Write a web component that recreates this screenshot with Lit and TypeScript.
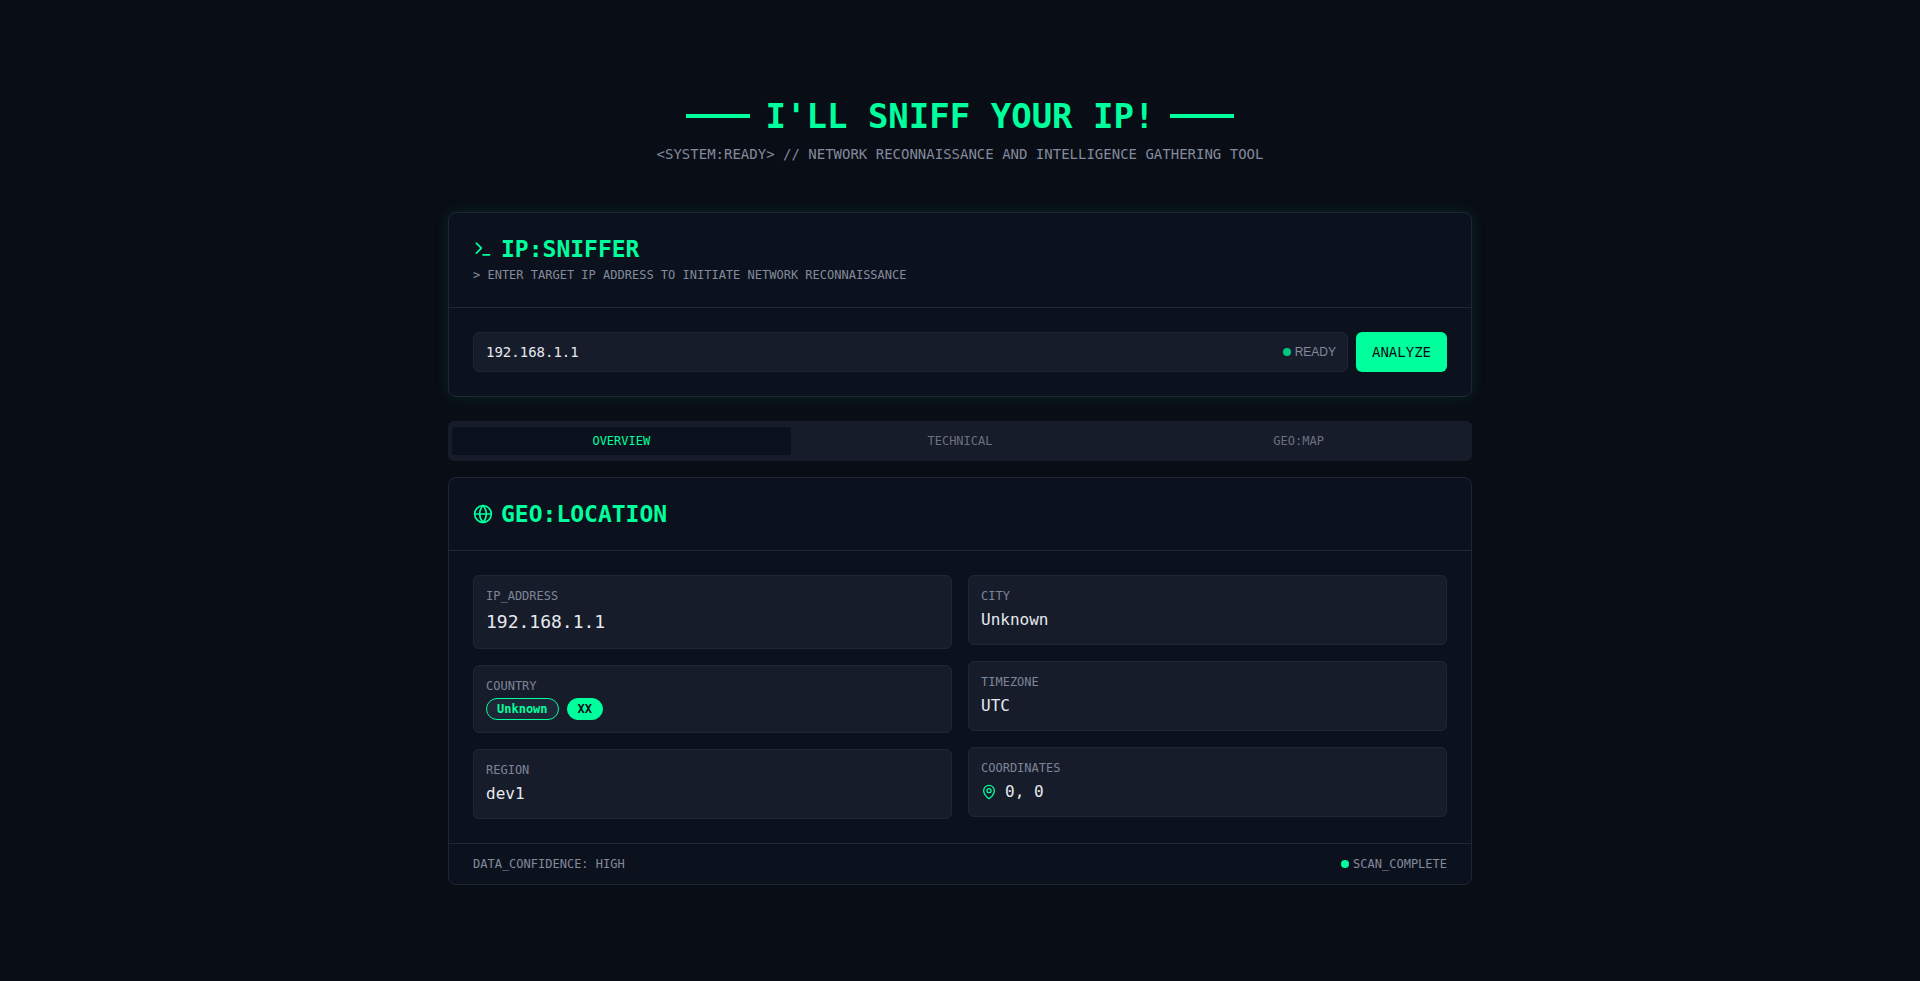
import { LitElement, html, css, svg, nothing } from "lit";
import { customElement, property, state } from "lit/decorators.js";
import { classMap } from "lit/directives/class-map.js";

const icons: Record<string, unknown> = {
  terminal: svg`<polyline points="4 17 10 11 4 5"></polyline><line x1="12" x2="20" y1="19" y2="19"></line>`,
  globe: svg`<circle cx="12" cy="12" r="10"></circle><path d="M12 2a14.5 14.5 0 0 0 0 20 14.5 14.5 0 0 0 0-20"></path><path d="M2 12h20"></path>`,
  pin: svg`<path d="M20 10c0 4.993-5.539 10.193-7.399 11.799a1 1 0 0 1-1.202 0C9.539 20.193 4 14.993 4 10a8 8 0 0 1 16 0"></path><circle cx="12" cy="10" r="3"></circle>`,
};

@customElement("line-icon")
class LineIcon extends LitElement {
  @property() name = "globe";
  static styles = css`
    :host { display: block; flex: none; width: 20px; height: 20px; }
    svg { display: block; width: 100%; height: 100%; }
  `;
  render() {
    return html`<svg viewBox="0 0 24 24" fill="none" stroke="currentColor" stroke-width="2"
      stroke-linecap="round" stroke-linejoin="round" aria-hidden="true">${icons[this.name]}</svg>`;
  }
}

@customElement("data-field")
class DataField extends LitElement {
  @property() label = "";
  @property({ type: Boolean }) large = false;
  static styles = css`
    :host {
      display: block; box-sizing: border-box; padding: 12px;
      background: #171c2b; border: 1px solid #1e2737; border-radius: 6px;
    }
    .label { margin-bottom: 4px; font-size: 12px; line-height: 16px; color: #7d8598; }
    .value { display: flex; align-items: center; gap: 8px; font-size: 16px; line-height: 24px; color: #e6e9ee; }
    .value.large { font-size: 18px; line-height: 28px; }
  `;
  render() {
    return html`<div class="label">${this.label}</div>
      <div class=${classMap({ value: true, large: this.large })}><slot></slot></div>`;
  }
}

@customElement("app-root")
class AppRoot extends LitElement {
  @state() private tab = "OVERVIEW";
  @state() private ip = "192.168.1.1";

  static styles = css`
    :host {
      display: block; box-sizing: border-box; min-height: 100vh; padding: 96px 16px 88px;
      background: #090d15; color: #e6e9ee;
      font-family: "DejaVu Sans Mono", monospace;
      --accent: #00ff9d; --muted: #838a9c; --line: #1e2737;
    }
    * { box-sizing: border-box; }
    h1, h2, p { margin: 0; }
    main { max-width: 1024px; margin: 0 auto; }
    .hero { display: flex; flex-direction: column; align-items: center; gap: 8px; margin-bottom: 48px; text-align: center; }
    .hero-row { display: flex; align-items: center; justify-content: center; gap: 16px; }
    .dash { width: 64px; height: 4px; background: var(--accent); }
    h1 { font-size: 34px; line-height: 40px; font-weight: 700; color: var(--accent); }
    .tagline { font-size: 14px; line-height: 20px; color: var(--muted); }
    .card { background: #0c121d; border: 1px solid var(--line); border-radius: 8px; }
    .glow { margin-bottom: 24px; box-shadow: 0 0 15px rgba(0, 255, 157, 0.1); }
    .card-head { padding: 24px; border-bottom: 1px solid var(--line); }
    .card-title { display: flex; align-items: center; gap: 8px; color: var(--accent); font-size: 23px; line-height: 24px; font-weight: 700; }
    .card-note { margin-top: 6px; font-size: 12px; line-height: 16px; color: var(--muted); }
    .query { display: flex; gap: 8px; padding: 24px; }
    .box { position: relative; flex: 1; }
    .box input {
      display: block; width: 100%; height: 40px; padding: 8px 80px 8px 12px;
      font: 14px/20px "DejaVu Sans Mono", monospace; color: #e6e9ee;
      background: #171c2b; border: 1px solid var(--line); border-radius: 6px; outline: none;
    }
    .ready { position: absolute; right: 12px; top: 0; bottom: 0; display: flex; align-items: center; gap: 4px;
      font: 12px/16px "Liberation Sans", sans-serif; color: var(--muted); pointer-events: none; }
    .dot { width: 8px; height: 8px; border-radius: 50%; background: var(--accent); }
    .dim { opacity: 0.75; }
    .go { height: 40px; padding: 0 16px; border: 0; border-radius: 6px; background: var(--accent); color: #0a0e17;
      font: 500 14px/20px "DejaVu Sans Mono", monospace; cursor: pointer; }
    .tabs { display: grid; grid-template-columns: repeat(3, 1fr); align-items: center; height: 40px; padding: 4px;
      margin-bottom: 16px; background: #171c2b; border-radius: 6px; }
    .tab { height: 28px; padding: 0 12px; border: 0; border-radius: 2px; background: none; color: #6c707b;
      font: 12px/16px "DejaVu Sans Mono", monospace; cursor: pointer; }
    .tab.on { background: #0c121d; color: var(--accent); }
    .fields { display: grid; grid-template-columns: 1fr 1fr; gap: 16px; padding: 24px; }
    .col { display: flex; flex-direction: column; gap: 16px; }
    .badge { height: 22px; padding: 2px 10px; border: 1px solid var(--accent); border-radius: 11px;
      font-size: 12px; line-height: 16px; font-weight: 700; color: var(--accent); background: #1e2737; }
    .badge.solid { background: var(--accent); color: #0a0e17; }
    .pin { width: 16px; height: 16px; color: var(--accent); }
    .foot { display: flex; justify-content: space-between; padding: 12px 24px; border-top: 1px solid var(--line);
      font-size: 12px; line-height: 16px; color: var(--muted); }
    .status { display: flex; align-items: center; gap: 4px; }
  `;

  render() {
    return html`<main>
      <header class="hero">
        <div class="hero-row"><span class="dash"></span><h1>I'LL SNIFF YOUR IP!</h1><span class="dash"></span></div>
        <p class="tagline">&lt;SYSTEM:READY&gt; // NETWORK RECONNAISSANCE AND INTELLIGENCE GATHERING TOOL</p>
      </header>

      <section class="card glow">
        <div class="card-head">
          <h2 class="card-title"><line-icon name="terminal"></line-icon>IP:SNIFFER</h2>
          <p class="card-note">&gt; ENTER TARGET IP ADDRESS TO INITIATE NETWORK RECONNAISSANCE</p>
        </div>
        <form class="query" @submit=${(e: Event) => e.preventDefault()}>
          <div class="box">
            <input id="ip" type="text" aria-label="IP address" .value=${this.ip}
              @input=${(e: Event) => (this.ip = (e.target as HTMLInputElement).value)} />
            <span class="ready"><span class="dot dim"></span>READY</span>
          </div>
          <button class="go" type="submit">ANALYZE</button>
        </form>
      </section>

      <div class="tabs" role="tablist">
        ${["OVERVIEW", "TECHNICAL", "GEO:MAP"].map(
          (t) => html`<button type="button" role="tab" aria-selected=${t === this.tab ? "true" : "false"}
            class=${classMap({ tab: true, on: t === this.tab })} @click=${() => (this.tab = t)}>${t}</button>`
        )}
      </div>

      ${this.tab !== "OVERVIEW" ? nothing : html`<section class="card">
        <div class="card-head">
          <h2 class="card-title"><line-icon name="globe"></line-icon>GEO:LOCATION</h2>
        </div>
        <div class="fields">
          <div class="col">
            <data-field label="IP_ADDRESS" large>192.168.1.1</data-field>
            <data-field label="COUNTRY"><span class="badge">Unknown</span><span class="badge solid">XX</span></data-field>
            <data-field label="REGION">dev1</data-field>
          </div>
          <div class="col">
            <data-field label="CITY">Unknown</data-field>
            <data-field label="TIMEZONE">UTC</data-field>
            <data-field label="COORDINATES"><line-icon class="pin" name="pin"></line-icon><span>0, 0</span></data-field>
          </div>
        </div>
        <div class="foot">
          <span>DATA_CONFIDENCE: HIGH</span>
          <span class="status"><span class="dot"></span>SCAN_COMPLETE</span>
        </div>
      </section>`}
    </main>`;
  }
}
